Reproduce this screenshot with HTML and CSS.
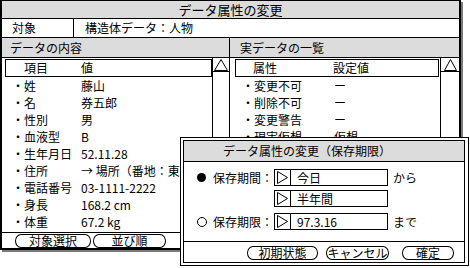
FILE: index.html
```html
<!DOCTYPE html>
<html lang="ja">
<head>
<meta charset="utf-8">
<title>データ属性の変更</title>
<link rel="stylesheet" href="styles.css">
</head>
<body>
<div class="window">
  <div class="titlebar">データ属性の変更</div>
  <div class="target">
    <div class="target-label">対象</div>
    <div class="target-value">構造体データ：人物</div>
  </div>
  <div class="panels">
    <section class="panel panel-left">
      <div class="panel-head">データの内容</div>
      <div class="panel-body">
        <div class="list">
          <div class="col-head"><span>項目</span><span>値</span></div>
          <div class="row"><span>・</span><span>姓</span><span>藤山</span></div>
          <div class="row"><span>・</span><span>名</span><span>券五郎</span></div>
          <div class="row"><span>・</span><span>性別</span><span>男</span></div>
          <div class="row"><span>・</span><span>血液型</span><span>B</span></div>
          <div class="row"><span>・</span><span>生年月日</span><span>52.11.28</span></div>
          <div class="row"><span>・</span><span>住所</span><span>→ 場所（番地：東京）</span></div>
          <div class="row"><span>・</span><span>電話番号</span><span>03-1111-2222</span></div>
          <div class="row"><span>・</span><span>身長</span><span>168.2 cm</span></div>
          <div class="row"><span>・</span><span>体重</span><span>67.2 kg</span></div>
        </div>
        <div class="scrollbar">
          <div class="arrow"><svg width="16" height="12" viewBox="0 0 16 12"><polygon points="1.5,11.5 8,0.5 14.5,11.5" fill="none" stroke="#000" stroke-width="1"/></svg></div>
        </div>
      </div>
    </section>
    <section class="panel panel-right">
      <div class="panel-head">実データの一覧</div>
      <div class="panel-body">
        <div class="list">
          <div class="col-head"><span>属性</span><span>設定値</span></div>
          <div class="row"><span>・</span><span>変更不可</span><span>ー</span></div>
          <div class="row"><span>・</span><span>削除不可</span><span>ー</span></div>
          <div class="row"><span>・</span><span>変更警告</span><span>ー</span></div>
          <div class="row"><span>・</span><span>現実仮想</span><span>仮想</span></div>
        </div>
        <div class="scrollbar">
          <div class="arrow"><svg width="18" height="12" viewBox="0 0 18 12"><polygon points="3.5,11.5 9.5,0.5 15.5,11.5" fill="none" stroke="#000" stroke-width="1"/></svg></div>
        </div>
      </div>
    </section>
  </div>
  <div class="buttonbar">
    <div class="btn btn-target">対象選択</div>
    <div class="btn btn-order">並び順</div>
  </div>
</div>

<div class="dialog">
  <div class="dialog-inner">
    <div class="dialog-title">データ属性の変更（保存期限）</div>
    <div class="dialog-body">
      <div class="opt">
        <span class="radio radio-on"></span>
        <span class="opt-label">保存期間：</span>
        <div class="field"><span class="tri"><svg width="15" height="15" viewBox="0 0 15 15"><polygon points="2.5,1.5 12.5,7.5 2.5,13.5" fill="none" stroke="#000" stroke-width="1"/></svg></span><span class="field-text">今日</span></div>
        <span class="suffix">から</span>
      </div>
      <div class="opt opt-second">
        <span class="radio radio-none"></span>
        <span class="opt-label"></span>
        <div class="field"><span class="tri"><svg width="15" height="15" viewBox="0 0 15 15"><polygon points="2.5,1.5 12.5,7.5 2.5,13.5" fill="none" stroke="#000" stroke-width="1"/></svg></span><span class="field-text">半年間</span></div>
      </div>
      <div class="opt opt-third">
        <span class="radio radio-off"></span>
        <span class="opt-label">保存期限：</span>
        <div class="field"><span class="tri"><svg width="15" height="15" viewBox="0 0 15 15"><polygon points="2.5,1.5 12.5,7.5 2.5,13.5" fill="none" stroke="#000" stroke-width="1"/></svg></span><span class="field-text">97.3.16</span></div>
        <span class="suffix">まで</span>
      </div>
    </div>
    <div class="dialog-buttons">
      <div class="btn btn-init">初期状態</div>
      <div class="btn btn-cancel">キャンセル</div>
      <div class="btn btn-ok">確定</div>
    </div>
  </div>
</div>
</body>
</html>
```

FILE: styles.css
```css
* {
  box-sizing: border-box;
  margin: 0;
  padding: 0;
}

body {
  margin: 0;
  width: 470px;
  height: 268px;
  overflow: hidden;
  position: relative;
  background: #fff;
  color: #000;
  font-family: "Noto Sans CJK JP", "Noto Sans", sans-serif;
  font-size: 12px;
  line-height: 1;
}

/* main window */
.window {
  width: 461px;
  height: 250px;
  border: 2px solid #000;
  border-top-width: 1px;
  box-shadow: 2px 2px 0 #7a7a7a;
  display: flex;
  flex-direction: column;
  background: #fff;
}

.titlebar {
  height: 18px;
  flex: none;
  background: #dcdcdc;
  border-bottom: 1px solid #000;
  text-align: center;
  font-size: 13px;
  line-height: 17px;
}

.target {
  height: 19px;
  flex: none;
  display: flex;
  border-bottom: 1px solid #000;
  line-height: 18px;
}

.target-label {
  width: 72px;
  border-right: 1px solid #000;
  padding-left: 10px;
}

.target-value {
  padding-left: 11px;
}

.panels {
  flex: 1;
  display: flex;
  min-height: 0;
}

.panel {
  display: flex;
  flex-direction: column;
}

.panel-left {
  width: 228px;
  border-right: 1px solid #000;
}

.panel-right {
  flex: 1;
}

.panel-head {
  height: 20px;
  flex: none;
  background: #dcdcdc;
  border-bottom: 1px solid #000;
  line-height: 19px;
  padding-left: 8px;
}

.panel-right .panel-head {
  padding-left: 10px;
}

.panel-body {
  flex: 1;
  display: flex;
  min-height: 0;
}

.list {
  flex: 1;
  overflow: hidden;
  padding-top: 1px;
  white-space: nowrap;
}

.col-head {
  height: 18px;
  border: 1px solid #000;
  display: grid;
  line-height: 16px;
}

.panel-left .col-head {
  margin-left: 3px;
  padding-left: 18px;
  grid-template-columns: 57px auto;
}

.panel-right .col-head {
  margin-left: 5px;
  margin-right: 1px;
  padding-left: 17px;
  grid-template-columns: 80px auto;
}

.row {
  height: 17px;
  line-height: 17px;
  display: grid;
}

.panel-left .row {
  padding-left: 10px;
  grid-template-columns: 12px 57px auto;
}

.panel-right .row {
  padding-left: 12px;
  grid-template-columns: 12px 80px auto;
}

.scrollbar {
  flex: none;
  border-left: 1px solid #000;
}

.panel-left .scrollbar {
  width: 17px;
}

.panel-right .scrollbar {
  width: 19px;
}

.arrow {
  height: 14px;
  border-bottom: 1px solid #000;
  padding-top: 1px;
}

.arrow svg {
  display: block;
}

/* bottom buttons */
.buttonbar {
  height: 16px;
  flex: none;
  border-top: 1px solid #000;
  display: flex;
  gap: 2px;
  padding-left: 13px;
  padding-top: 1px;
}

.btn {
  height: 14px;
  border: 1px solid #000;
  border-radius: 6px / 7px;
  background: #fff;
  text-align: center;
  line-height: 12px;
}

.btn-target { width: 76px; }
.btn-order { width: 73px; }

/* dialog */
.dialog {
  position: absolute;
  left: 180px;
  top: 137px;
  width: 289px;
  height: 129px;
  border: 1px solid #000;
  padding: 2px 3px 2px 2px;
  background: #fff;
}

.dialog-inner {
  height: 100%;
  border: 1px solid #000;
  display: flex;
  flex-direction: column;
}

.dialog-title {
  height: 21px;
  flex: none;
  background: #dcdcdc;
  border-bottom: 1px solid #000;
  line-height: 20px;
  padding-left: 39px;
}

.dialog-body {
  height: 79px;
  flex: none;
  padding: 7px 0 0 13px;
}

.opt {
  height: 17px;
  display: flex;
  align-items: center;
}

.opt-second { margin-top: 4px; }
.opt-third { margin-top: 6px; }

.radio {
  width: 16px;
  flex: none;
  display: flex;
  align-items: center;
}

.radio-on::before {
  content: "";
  width: 9px;
  height: 9px;
  border-radius: 50%;
  background: #000;
}

.radio-off::before {
  content: "";
  width: 8px;
  height: 8px;
  border-radius: 50%;
  border: 1px solid #000;
}

.opt-label {
  width: 61px;
  flex: none;
}

.field {
  width: 114px;
  height: 17px;
  flex: none;
  border: 1px solid #000;
  display: flex;
}

.tri {
  width: 16px;
  flex: none;
  border-right: 1px solid #000;
}

.tri svg {
  display: block;
}

.field-text {
  padding-left: 6px;
  line-height: 15px;
}

.suffix {
  margin-left: 5px;
}

.dialog-buttons {
  flex: 1;
  border-top: 1px solid #000;
  display: flex;
  padding-left: 63px;
  padding-top: 4px;
}

.btn-init { width: 71px; }
.btn-cancel { width: 63px; margin-left: 8px; }
.btn-ok { width: 52px; margin-left: 13px; }
```
